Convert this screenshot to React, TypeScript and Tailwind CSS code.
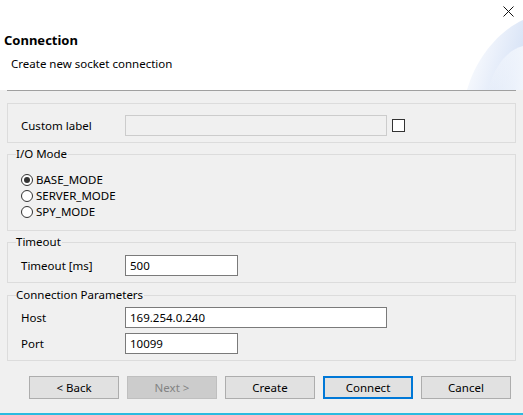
import React from 'react';

function Group({ title, className, children }: { title?: string; className?: string; children: React.ReactNode }) {
  return (
    <div className={`relative border border-[#dcdcdc] ${className ?? ''}`}>
      {title && (
        <span className="absolute left-[8px] top-[-9px] bg-[#f0f0f0] pr-[1px] leading-[16px]">{title}</span>
      )}
      {children}
    </div>
  );
}

function Field({ label, value, wide }: { label: string; value: string; wide?: boolean }) {
  return (
    <div className="flex items-center">
      <span className="w-[104px]">{label}</span>
      <div
        className={`h-[21px] border border-[#7a7a7a] bg-white pl-[4px] leading-[19px] ${wide ? 'w-[262px]' : 'w-[113px]'}`}
      >
        {value}
      </div>
    </div>
  );
}

function Radio({ label, checked }: { label: string; checked?: boolean }) {
  return (
    <div className="flex h-[16px] items-center gap-[3px]">
      <span className="flex h-[12px] w-[12px] items-center justify-center rounded-full border border-[#333333] bg-white">
        {checked && <span className="h-[6px] w-[6px] rounded-full bg-[#333333]" />}
      </span>
      <span>{label}</span>
    </div>
  );
}

function Button({ label, disabled, primary }: { label: string; disabled?: boolean; primary?: boolean }) {
  let cls = 'border border-[#adadad] bg-[#e1e1e1] text-black';
  if (disabled) cls = 'border border-[#bfbfbf] bg-[#cccccc] text-[#838383]';
  if (primary) cls = 'border-2 border-[#0078d7] bg-[#e1e1e1] text-black';
  return (
    <div className={`flex h-[23px] w-[90px] items-center justify-center ${cls}`}>{label}</div>
  );
}

export default function App() {
  return (
    <div
      className="flex h-[415px] w-[523px] flex-col overflow-hidden bg-[#f0f0f0] text-[11.5px] text-black"
      style={{ fontFamily: '"Noto Sans", "Open Sans", sans-serif' }}
    >
      {/* Header */}
      <div className="relative h-[90px] shrink-0 bg-white">
        <svg className="absolute right-0 top-0" width="70" height="90" viewBox="0 0 70 90">
          <defs>
            <linearGradient id="sw" x1="0" y1="0.2" x2="1" y2="0.6">
              <stop offset="0" stopColor="#ffffff" />
              <stop offset="0.45" stopColor="#edf2fb" />
              <stop offset="1" stopColor="#d6e2f6" />
            </linearGradient>
            <linearGradient id="sw2" x1="0" y1="0" x2="1" y2="0">
              <stop offset="0" stopColor="#ffffff" stopOpacity="0" />
              <stop offset="1" stopColor="#f3f7fd" stopOpacity="0.9" />
            </linearGradient>
          </defs>
          <path d="M70 20 C48 30 24 55 14 90 L70 90 Z" fill="url(#sw)" />
          <path d="M70 46 C55 50 42 64 35 90 L70 90 Z" fill="url(#sw2)" />
        </svg>
        <svg className="absolute left-[503px] top-[6px]" width="11" height="11" viewBox="0 0 11 11">
          <path d="M0.5 0.5 L10.5 10.5 M10.5 0.5 L0.5 10.5" stroke="#111" strokeWidth="1" />
        </svg>
        <div className="relative pl-[4px] pt-[31px] text-[13px] font-bold leading-[18px]">Connection</div>
        <div className="relative pl-[11px] pt-[6px] leading-[17px]">Create new socket connection</div>
      </div>
      <div className="mx-[7px] h-px shrink-0 bg-[#a0a0a0]" />

      {/* Body */}
      <div className="flex flex-col px-[7px] pt-[12px]">
        <Group className="pb-[6px] pl-[13px] pt-[11px]">
          <div className="flex items-center">
            <span className="w-[104px]">Custom label</span>
            <div className="h-[21px] w-[262px] border border-[#cccccc] bg-[#f0f0f0]" />
            <span className="ml-[5px] h-[13px] w-[13px] border border-[#333333] bg-white" />
          </div>
        </Group>

        <Group title="I/O Mode" className="mt-[11px] pb-[10px] pl-[13px] pt-[17px]">
          <Radio label="BASE_MODE" checked />
          <Radio label="SERVER_MODE" />
          <Radio label="SPY_MODE" />
        </Group>

        <Group title="Timeout" className="mt-[11px] pb-[6px] pl-[13px] pt-[12px]">
          <Field label="Timeout [ms]" value="500" />
        </Group>

        <Group title="Connection Parameters" className="mt-[12px] flex flex-col gap-[5px] pb-[6px] pl-[13px] pt-[11px]">
          <Field label="Host" value="169.254.0.240" wide />
          <Field label="Port" value="10099" />
        </Group>
      </div>

      {/* Buttons */}
      <div className="mt-[15px] flex gap-[8px] pl-[29px]">
        <Button label="< Back" />
        <Button label="Next >" disabled />
        <Button label="Create" />
        <Button label="Connect" primary />
        <Button label="Cancel" />
      </div>

      <div className="mt-auto h-[2px] shrink-0 bg-[#2bbbe0]" />
    </div>
  );
}
